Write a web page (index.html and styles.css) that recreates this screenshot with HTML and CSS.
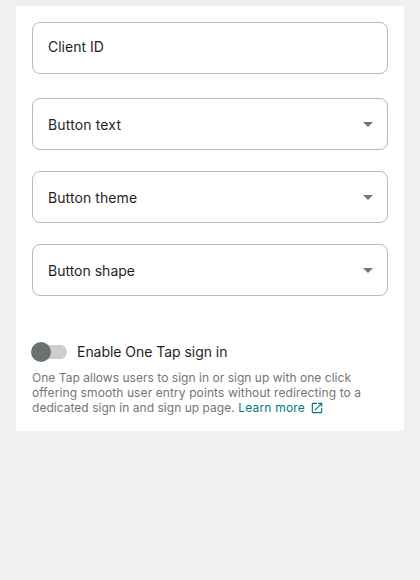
FILE: index.html
```html
<!DOCTYPE html>
<html lang="en">
<head>
<meta charset="utf-8">
<title>Sign in button settings</title>
<link rel="stylesheet" href="styles.css">
</head>
<body>
<main class="card">
  <div class="field field-input"><span>Client ID</span></div>
  <div class="field"><span class="label-text">Button text</span><i class="arrow"></i></div>
  <div class="field"><span class="label-theme">Button theme</span><i class="arrow"></i></div>
  <div class="field"><span>Button shape</span><i class="arrow"></i></div>
  <div class="toggle-row">
    <span class="switch"><span class="thumb"></span></span>
    <span class="toggle-label">Enable One Tap sign in</span>
  </div>
  <p class="hint">
    <span class="line line-1">One Tap allows users to sign in or sign up with one click</span>
    <span class="line line-2">offering smooth user entry points without redirecting to a</span>
    <span class="line line-3">dedicated sign in and sign up page. <a class="link">Learn more<svg class="open" viewBox="0 0 24 24"><path fill="currentColor" d="M19 19H5V5h7V3H5a2 2 0 0 0-2 2v14a2 2 0 0 0 2 2h14c1.100 0 2-.9 2-2v-7h-2v7zM14 3v2h3.590l-9.830 9.830 1.410 1.410L19 6.410V10h2V3h-7z"/></svg></a></span>
  </p>
</main>
</body>
</html>
```
FILE: styles.css
```css
* { box-sizing: border-box; }
body {
  margin: 0;
  padding: 6px 16px;
  background: #f0f0f0;
  font-family: Inter, Roboto, sans-serif;
  color: #1f1f1f;
}
.card {
  height: 425px;
  padding: 16px;
  background: #fff;
}
.field {
  display: flex;
  align-items: center;
  justify-content: space-between;
  height: 52px;
  margin-bottom: 21px;
  padding: 2px 14px 0 15px;
  border: 1px solid #babcbc;
  border-radius: 8px;
  font-size: 14px;
  line-height: 20px;
}
.field-input {
  margin-bottom: 24px;
  padding-top: 0;
  padding-bottom: 2px;
}
.label-text { letter-spacing: 0.15px; }
.label-theme { letter-spacing: 0.08px; }
.arrow {
  width: 10px;
  height: 5px;
  margin-bottom: 1px;
  background: #757575;
  clip-path: polygon(0 0, 100% 0, 50% 100%);
}
.toggle-row {
  display: flex;
  align-items: center;
  height: 20px;
  margin-top: 46px;
}
.switch {
  display: flex;
  align-items: center;
  width: 35px;
  height: 14px;
  border-radius: 7px;
  background: #c9cfd2;
}
.thumb {
  flex: none;
  width: 20px;
  height: 20px;
  margin-left: -1px;
  border-radius: 50%;
  background: #6b716d;
}
.toggle-label {
  margin-left: 10px;
  font-size: 14px;
  line-height: 20px;
  letter-spacing: -0.04px;
}
.hint {
  margin: 8px 0 0;
  font-size: 12px;
  line-height: 15px;
  color: #757575;
}
.line {
  display: block;
  white-space: nowrap;
}
.line-1 { letter-spacing: 0.03px; }
.line-2 { letter-spacing: 0.1px; }
.line-3 { letter-spacing: 0.03px; }
.link {
  color: #00797d;
  letter-spacing: 0.2px;
}
.open {
  width: 14px;
  height: 14px;
  margin-left: 5px;
  vertical-align: -3px;
}
```
